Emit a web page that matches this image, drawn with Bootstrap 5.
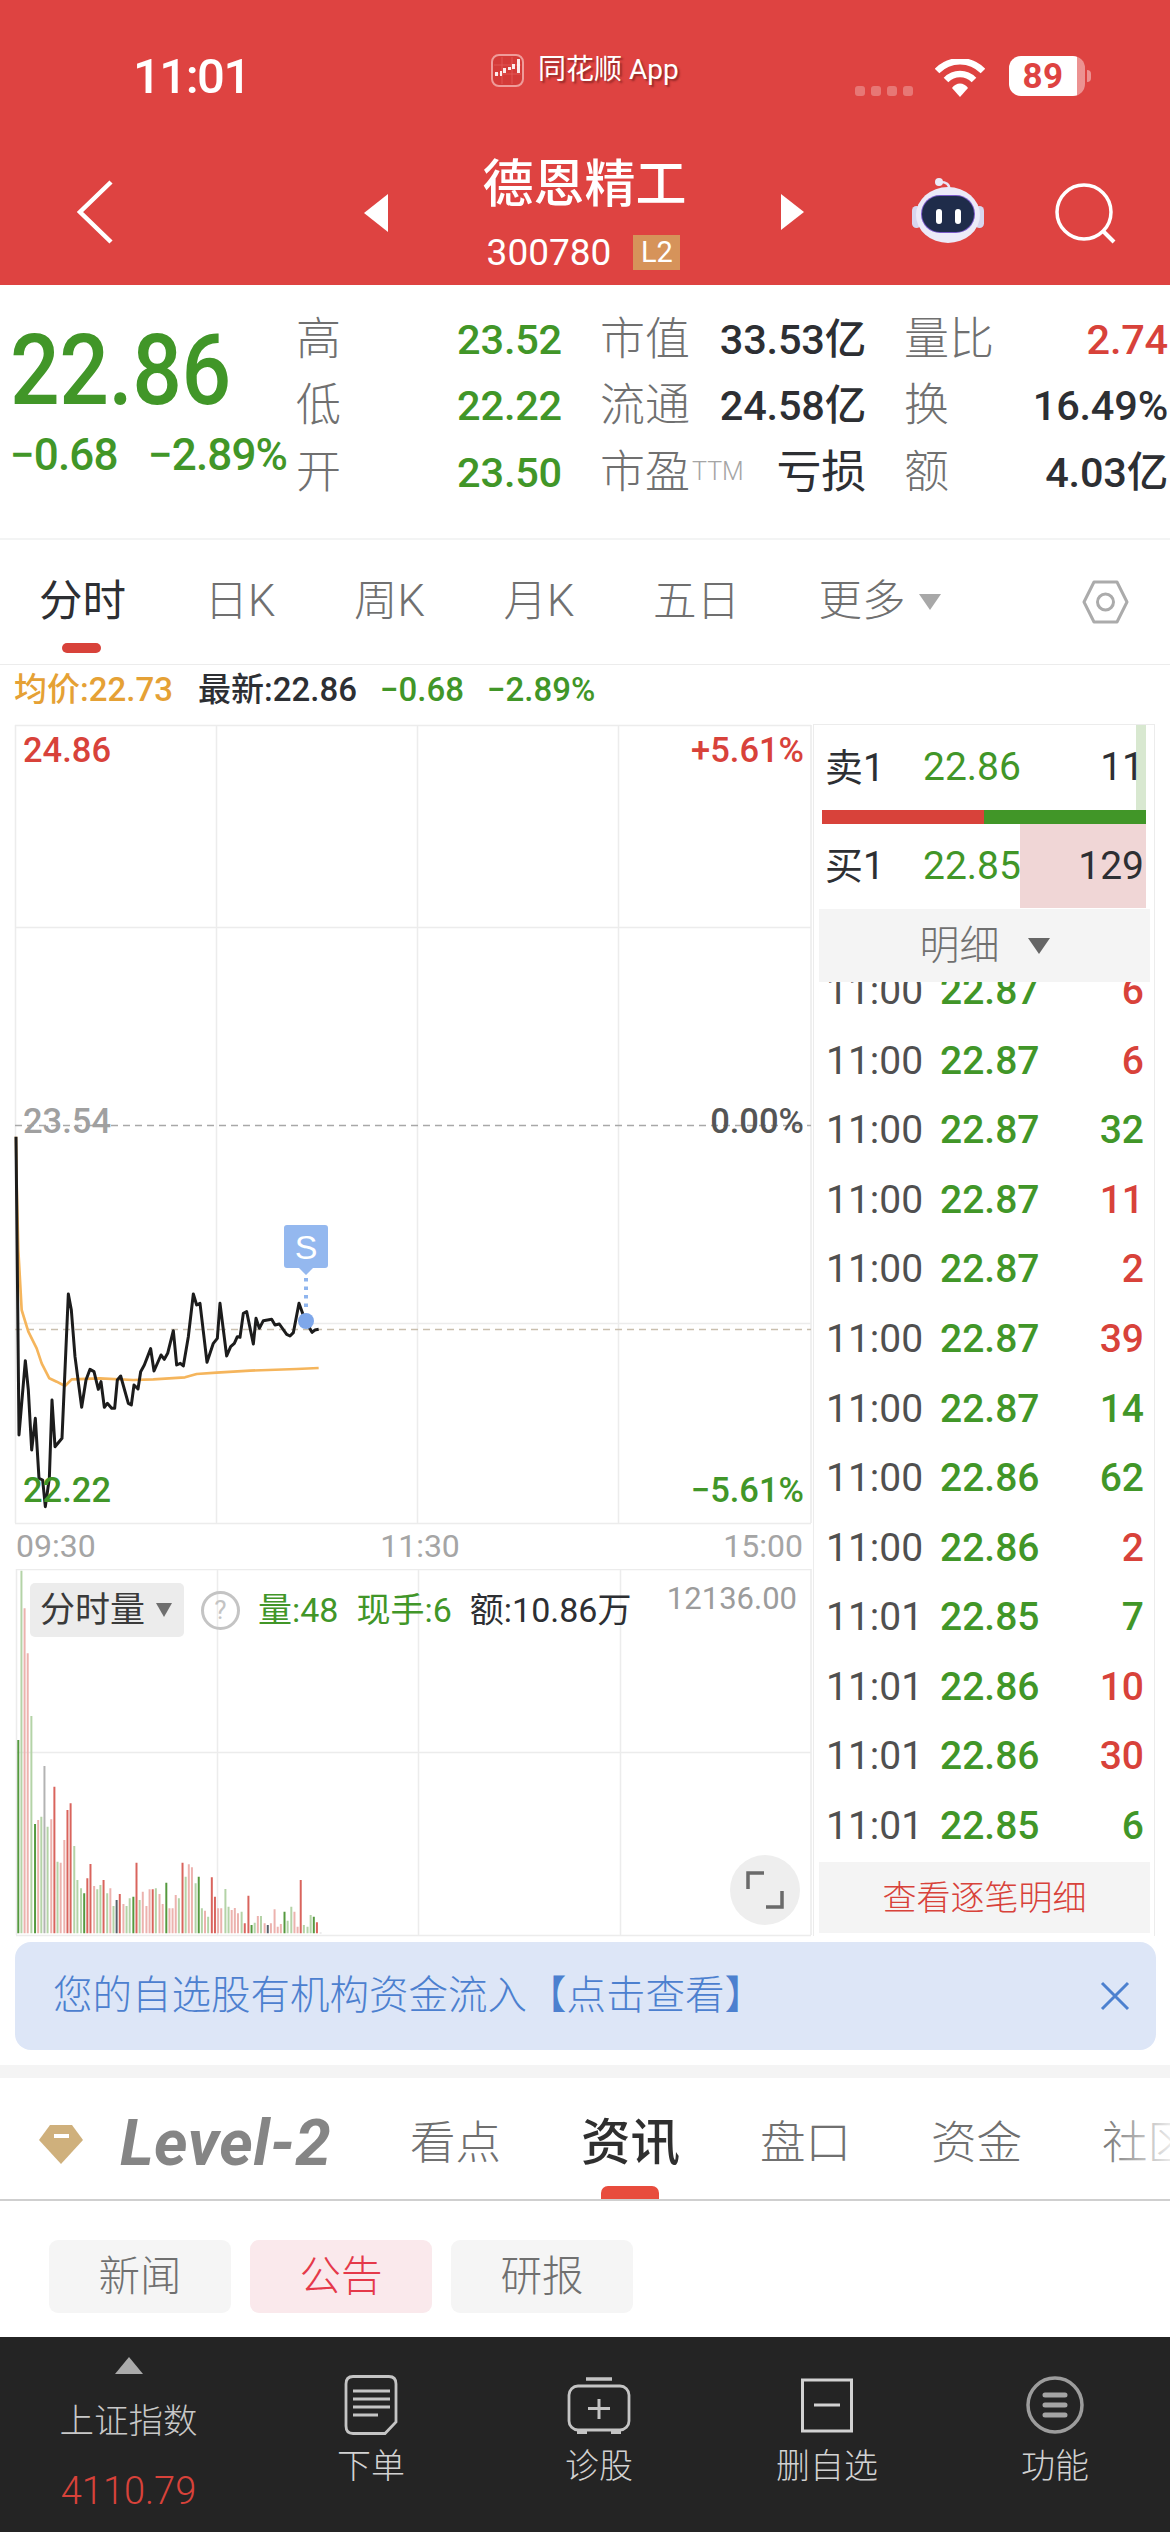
<!doctype html>
<html lang="zh-CN">
<head>
<meta charset="utf-8">
<title>德恩精工 300780</title>
<link href="https://cdn.jsdelivr.net/npm/bootstrap@5.3.0/dist/css/bootstrap.min.css" rel="stylesheet">
<style>
:root{--up:#d8423a;--down:#419628;--ink:#2d2f33;--mute:#707070;--line:#ececec;}
html,body{margin:0;background:#fff;}
body{width:1170px;height:2532px;overflow:hidden;font-family:Roboto,"Noto Sans CJK SC",sans-serif;color:var(--ink);line-height:1;}
.c-up{color:var(--up);}.c-down{color:var(--down);}.c-mute{color:var(--mute);}
/* header */
.app-head{background:#de4341;height:285px;color:#fff;}
.status-row{height:150px;padding:50px 0 0 133px;}
.st-time{width:358px;font-size:49px;font-weight:500;letter-spacing:-1.5px;margin-top:2px;}
.st-mid{width:364px;height:50px;margin-top:-5px;font-size:28px;gap:14px;text-shadow:2px 2px 2px rgba(90,20,20,.55);}
.st-right{gap:22px;margin-top:6px;}
.st-dots{gap:6px;margin-top:30px;}
.st-wifi{margin-top:3px;}
.st-dots i{display:block;width:10px;height:10px;border-radius:3px;background:rgba(255,255,255,.28);}
.st-batt{width:76px;height:40px;border-radius:12px;background:linear-gradient(90deg,#fff 89%,rgba(255,255,255,.42) 89%);color:#de4341;font-size:35px;font-weight:700;padding-right:8px;letter-spacing:.5px;position:relative;margin-left:2px;}
.st-batt::after{content:"";position:absolute;right:-6px;top:14px;width:4px;height:12px;background:rgba(255,255,255,.42);border-radius:0 4px 4px 0;}
.nav-row{height:135px;}
.nav-back{width:364px;padding:30px 0 0 76px;}
.nav-tri{margin-top:44px;}
.nav-title{width:393px;text-align:center;}
.nav-name{height:70px;font-size:51px;font-weight:500;line-height:70px;}
.nav-code{height:65px;font-size:37px;gap:22px;margin-left:-2px;}
.lv-tag{width:47px;height:35px;background:#d6935a;font-size:29px;color:#fff;}
.nav-bot{margin:28px 0 0 108px;}
.nav-find{margin:33px 0 0 71px;}
/* quote */
.quote-box{height:255px;border-bottom:2px solid #f3f4f4;padding:21px 2px 0 13px;}
.quote-main{width:283px;margin-left:-3px;margin-right:3px;}
.price-big{font-size:87.5px;font-weight:500;color:var(--down);margin-top:22px;height:84px;line-height:84px;transform:scaleY(1.13);letter-spacing:-.5px;transform-origin:left center;}
.price-sub{font-size:44px;font-weight:500;color:var(--down);margin-top:21px;letter-spacing:-.9px;justify-content:space-between;width:277px;white-space:nowrap;}
.quote-grid{display:grid;grid-template-columns:266px 266px 264px;column-gap:38px;grid-auto-rows:66.5px;}
.q-cell{font-size:41.5px;white-space:nowrap;}
.q-val{font-weight:500;letter-spacing:-.2px;}
.q-val.plain{font-weight:400;font-size:45px;}
.q-lab{font-size:45px;color:var(--mute);font-weight:300;}
.q-sup{font-size:25px;color:#a5a5a5;font-weight:300;vertical-align:8px;margin-left:2px;}
/* period tabs */
.period-bar{height:125px;border-bottom:1px solid var(--line);padding:0 41px 0 39px;gap:78.5px;}
.period-item{position:relative;font-size:43.5px;color:var(--mute);font-weight:300;}
.period-item.on{color:var(--ink);font-weight:400;}
.period-item.on::after{content:"";position:absolute;left:23px;top:63px;width:39px;height:10px;border-radius:5px;background:#d8423a;}
.tri-down{display:inline-block;width:0;height:0;border-style:solid;border-width:16px 11px 0 11px;border-color:#a8a8a8 transparent transparent;}
.period-more{gap:14px;}
.period-gear{margin-left:auto;}
.quote-line{height:59px;padding:0 0 10px 14px;font-size:33px;font-weight:500;}
/* chart */
.chart-wrap{height:1218px;}
.chart-left{width:813px;flex:none;}
.chart-left svg{display:block;}
.chart-txt{font-size:34.5px;font-weight:500;font-family:Roboto,"Noto Sans CJK SC",sans-serif;}
.vol-pane{position:relative;height:373px;}
.vol-read{position:absolute;left:30px;top:14px;font-size:34px;align-items:center;}
.vol-pill{width:154px;height:54px;background:#ececec;border-radius:5px;padding-left:10px;font-size:35px;gap:11px;color:#3a3a3a;}
.vol-tip{width:39px;height:39px;border:3px solid #c4c4c4;border-radius:50%;color:#c4c4c4;font-size:26px;margin:0 18px 0 17px;}
.vol-read .sp{margin-right:18px;}
.vol-max{position:absolute;right:16px;top:14px;font-size:31px;color:#9c9c9c;}
.vol-exp{position:absolute;left:730px;top:286px;width:70px;height:70px;border-radius:50%;background:#eeeeee;}
/* right panel */
.deal-panel{width:342px;border:1px solid var(--line);border-bottom:0;height:1212px;}
.ob-row{margin:0 8px 0 8px;padding:0 2px 0 3px;font-size:39px;position:relative;}
.ob-row .lab{width:98px;font-size:38px;}
.ob-sell{height:85px;}
.ob-buy{height:84px;}
.ob-depth{position:absolute;top:0;bottom:0;right:0;}
.ob-vol{margin-left:auto;position:relative;}
.ob-bar{margin:0 8px;height:14px;background:var(--down);}
.ob-bar div{height:14px;background:var(--up);}
.deal-head{margin:1px 4px 0 5px;height:73px;background:#f4f4f4;font-size:40px;color:var(--mute);gap:28px;position:relative;z-index:1;font-weight:300;}
.deal-head .tri-down{border-color:#666 transparent transparent;}
.deal-list{height:878px;overflow:hidden;}
.deal-inner{margin-top:-25px;}
.deal-row{height:69.55px;padding:0 10px 0 12px;font-size:39px;font-weight:500;}
.deal-row .t{width:114px;color:#505050;font-weight:400;}
.deal-row .v{margin-left:auto;}
.deal-more{margin:2px 4px 0 5px;height:71px;background:#f4f4f4;font-size:34px;color:var(--up);font-weight:300;}
/* notice */
.notice-bar{margin:0 14px 0 15px;height:108px;border-radius:16px;background:#dde6f7;padding:0 26px 0 38px;color:#4c80cf;font-size:39.5px;font-weight:300;}
.band{height:13px;background:#f4f4f4;margin-top:15px;}
/* bottom tabs */
.sec-tabs{height:123px;border-bottom:2px solid #cfcfcf;overflow:hidden;position:relative;padding-top:11px;}
.sec-logo{width:410px;flex:none;padding-left:39px;gap:37px;}
.lv-word{font-size:64px;font-style:italic;font-weight:700;color:#858585;letter-spacing:.5px;}
.sec-list{gap:80px;font-size:45.5px;color:var(--mute);font-weight:300;white-space:nowrap;}
.sec-item{position:relative;}
.sec-item.on{color:#2f2f2f;font-size:49.5px;font-weight:500;}
.sec-item.on::after{content:"";position:absolute;left:20px;top:67px;width:58px;height:13px;border-radius:7px 7px 0 0;background:#e84c3d;}
.sec-fade{position:absolute;right:0;top:0;bottom:0;width:70px;background:linear-gradient(90deg,rgba(255,255,255,0),rgba(255,255,255,.85));}
.sub-tabs{height:136px;padding:39px 0 0 49px;gap:19px;}
.sub-pill{width:182px;height:73px;background:#f5f5f5;border-radius:9px;font-size:41.5px;color:var(--mute);font-weight:300;}
.sub-pill.on{background:#fae9ec;color:#e5394a;}
/* dock */
.dock{height:195px;background:#242424;}
.dock-index{width:257px;flex:none;padding-top:20px;color:#c8c8c8;}
.dock-tri{width:0;height:0;border-style:solid;border-width:0 14px 17px;border-color:transparent transparent #aaa;margin-bottom:28px;}
.dock-name{font-size:34.5px;font-weight:300;height:38px;line-height:38px;}
.dock-num{font-size:38px;font-weight:300;color:#d8423a;margin-top:32px;}
.dock-item{width:228px;flex:none;padding-top:38px;color:#d2d2d2;}
.dock-ico{height:60px;}
.dock-lab{font-size:34px;font-weight:300;height:42px;line-height:42px;margin-top:10px;}
</style>
</head>
<body>

<header class="app-head">
  <div class="status-row d-flex">
    <div class="st-time">11:01</div>
    <div class="st-mid d-flex align-items-center">
      <svg width="33" height="33" viewBox="0 0 33 33"><rect x="1" y="1" width="31" height="31" rx="7" fill="#d43b39" stroke="#ef9c9a" stroke-width="2"/><path d="M3 11H30M3 20H30M11 3V30M21 3V30" stroke="#e5615f" stroke-width=".7"/><path d="M4 18h3v4H4zM9 17h2v5H9zM12 14h3v5h-3zM17 13h3v3h-3zM21 10h3v5h-3zM26 5h3v14h-3z" fill="#fff" opacity=".9"/></svg>
      <span>同花顺 App</span>
    </div>
    <div class="st-right d-flex align-items-start">
      <div class="st-dots d-flex"><i></i><i></i><i></i><i></i></div>
      <svg class="st-wifi" width="50" height="38" viewBox="0 0 50 38"><path d="M2 12C15-1 35-1 48 12" fill="none" stroke="#fff" stroke-width="6.5"/><path d="M11 21C19 13 31 13 39 21" fill="none" stroke="#fff" stroke-width="6.5"/><path d="M17 29C21 23 29 23 33 29L25 38Z" fill="#fff"/></svg>
      <div class="st-batt d-flex align-items-center justify-content-center">89</div>
    </div>
  </div>
  <div class="nav-row d-flex align-items-start">
    <div class="nav-back"><svg width="38" height="64" viewBox="0 0 38 64"><path d="M35 2 4 32 35 62" fill="none" stroke="#fff" stroke-width="4.5"/></svg></div>
    <svg class="nav-tri" width="24" height="38" viewBox="0 0 24 38"><path d="M24 0V38L0 19Z" fill="#fff"/></svg>
    <div class="nav-title">
      <div class="nav-name">德恩精工</div>
      <div class="nav-code d-flex align-items-center justify-content-center"><span>300780</span><span class="lv-tag d-flex align-items-center justify-content-center">L2</span></div>
    </div>
    <svg class="nav-tri" width="23" height="36" viewBox="0 0 23 36"><path d="M0 0V36L23 18Z" fill="#fff"/></svg>
    <svg class="nav-bot" width="72" height="66" viewBox="0 0 72 66"><path d="M37 12C38 6 34 4 28 4" fill="none" stroke="#e9e6f6" stroke-width="2.5"/><circle cx="27" cy="4" r="4" fill="#eceaf7"/><rect x="0" y="28" width="9" height="22" rx="4.5" fill="#d8d6ee"/><rect x="63" y="28" width="9" height="22" rx="4.5" fill="#d8d6ee"/><ellipse cx="36" cy="37" rx="32" ry="28" fill="#eceaf8"/><rect x="9" y="17" width="54" height="38" rx="19" fill="#7a5ac8"/><rect x="10" y="18" width="52" height="36" rx="18" fill="#1f2c4a"/><rect x="24" y="31" width="6" height="15" rx="3" fill="#fff"/><rect x="43" y="31" width="6" height="15" rx="3" fill="#fff"/></svg>
    <svg class="nav-find" width="62" height="62" viewBox="0 0 62 62"><circle cx="29" cy="29" r="27" fill="none" stroke="#fff" stroke-width="3.5"/><path d="M48 48 59 59" stroke="#fff" stroke-width="4"/></svg>
  </div>
</header>

<section class="quote-box d-flex">
  <div class="quote-main">
    <div class="price-big">22.86</div>
    <div class="price-sub d-flex"><span>−0.68</span><span>−2.89%</span></div>
  </div>
  <div class="quote-grid">
    <div class="q-cell d-flex justify-content-between align-items-center"><span class="q-lab">高</span><span class="q-val c-down">23.52</span></div>
    <div class="q-cell d-flex justify-content-between align-items-center"><span class="q-lab">市值</span><span class="q-val">33.53亿</span></div>
    <div class="q-cell d-flex justify-content-between align-items-center"><span class="q-lab">量比</span><span class="q-val c-up">2.74</span></div>
    <div class="q-cell d-flex justify-content-between align-items-center"><span class="q-lab">低</span><span class="q-val c-down">22.22</span></div>
    <div class="q-cell d-flex justify-content-between align-items-center"><span class="q-lab">流通</span><span class="q-val">24.58亿</span></div>
    <div class="q-cell d-flex justify-content-between align-items-center"><span class="q-lab">换</span><span class="q-val">16.49%</span></div>
    <div class="q-cell d-flex justify-content-between align-items-center"><span class="q-lab">开</span><span class="q-val c-down">23.50</span></div>
    <div class="q-cell d-flex justify-content-between align-items-center"><span class="q-lab">市盈<span class="q-sup">TTM</span></span><span class="q-val plain">亏损</span></div>
    <div class="q-cell d-flex justify-content-between align-items-center"><span class="q-lab">额</span><span class="q-val">4.03亿</span></div>
  </div>
</section>

<nav class="period-bar d-flex align-items-center">
  <span class="period-item on">分时</span>
  <span class="period-item">日K</span>
  <span class="period-item">周K</span>
  <span class="period-item">月K</span>
  <span class="period-item">五日</span>
  <span class="period-item period-more d-flex align-items-center">更多<i class="tri-down"></i></span>
  <svg class="period-gear" width="47" height="44" viewBox="0 0 47 44"><path d="M12 2H35L45 22 35 42H12L2 22Z" fill="none" stroke="#ababab" stroke-width="3" stroke-linejoin="round"/><circle cx="23.500" cy="22" r="8" fill="none" stroke="#ababab" stroke-width="3"/></svg>
</nav>

<div class="quote-line d-flex align-items-center">
  <span style="color:#e5a135;width:184px">均价:22.73</span>
  <span style="width:182px">最新:22.86</span>
  <span class="c-down" style="width:107px">−0.68</span>
  <span class="c-down">−2.89%</span>
</div>

<div class="chart-wrap d-flex">
  <div class="chart-left">
    <svg width="813" height="845" viewBox="0 724 813 845" class="chart-txt">
      <path d="M15.500 725V1523M216.500 725V1523M417.500 725V1523M618.500 725V1523M811 725V1523M15 725.500H811M15 927.500H811M15 1323.500H811M15 1523.500H811" stroke="#ececec" stroke-width="1.5" fill="none"/>
      <path d="M15 1125.500H811" stroke="#a8a8a8" stroke-width="1.5" stroke-dasharray="7 5"/>
      <path d="M15 1329.500H811" stroke="#c9bfae" stroke-width="1.5" stroke-dasharray="7 5"/>
      <g transform="translate(0 1150) scale(.33333)" fill="none" stroke-linejoin="round">
        <path d="M48-40 50 100 55 300 65 480 85 545 110 595 125 640 148 685 170 695 195 708 215 688 300 685 400 690 460 688 555 682 590 672 650 668 750 662 890 657 956 654" stroke="#f5b55c" stroke-width="8"/>
        <path d="M48-40 57 855 76 632 85 720 95 900 106 805 117 985 128 990 136 1070 148 985 156 750 165 890 186 865 205 432 214 480 225 620 245 772 258 690 270 658 282 665 295 718 303 695 313 772 322 760 335 775 344 775 352 690 362 678 385 760 394 765 402 705 414 717 422 665 433 645 452 596 462 663 483 615 493 628 503 610 520 542 530 645 541 640 550 648 565 560 580 432 590 465 600 460 621 637 640 580 652 565 660 460 680 618 692 590 703 580 712 560 720 562 730 490 740 485 760 582 768 505 778 535 790 512 815 508 825 525 838 522 860 553 870 558 880 548 897 460 915 510 936 547 945 540 956 538" stroke="#1c1c1c" stroke-width="9"/>
      </g>
      <path d="M306 1278V1312" stroke="#8fb5ee" stroke-width="4" stroke-dasharray="3.500 5"/>
      <circle cx="306" cy="1321" r="8" fill="#7ea7ea"/>
      <path d="M287 1225H325Q328 1225 328 1228V1265Q328 1268 325 1268H313L306 1275 299 1268H287Q284 1268 284 1265V1228Q284 1225 287 1225Z" fill="#94b8ef"/>
      <text x="306" y="1259" text-anchor="middle" font-size="34" font-weight="400" fill="#fff" font-family="Liberation Sans">S</text>
      <text x="23" y="762" fill="#d8423a">24.86</text>
      <text x="804" y="762" text-anchor="end" fill="#d8423a">+5.61%</text>
      <text x="23" y="1133" fill="#a0a0a0">23.54</text>
      <text x="804" y="1133" text-anchor="end" fill="#555">0.00%</text>
      <text x="23" y="1502" fill="#419628">22.22</text>
      <text x="804" y="1502" text-anchor="end" fill="#419628">−5.61%</text>
      <text x="16" y="1557" fill="#a5a5a5" font-size="32" font-weight="400">09:30</text>
      <text x="420" y="1557" fill="#a5a5a5" font-size="32" font-weight="400" text-anchor="middle">11:30</text>
      <text x="803" y="1557" fill="#a5a5a5" font-size="32" font-weight="400" text-anchor="end">15:00</text>
    </svg>
    <div class="vol-pane">
      <svg width="813" height="373" viewBox="0 1569 813 373">
        <path d="M16 1569.500H811M16 1752.500H811M16 1935.500H811M16.500 1569V1935M217.500 1569V1935M418.500 1569V1935M620.500 1569V1935M811 1569V1935" stroke="#ececec" stroke-width="1.5" fill="none"/>
        <g transform="translate(0 1540) scale(.523 .33333)" fill="none" stroke-width="3.800">
          <path stroke="#ecb2ae" d="M47 1180V205M53 1180V340M73 1180V840M98 1180V838M116 1180V968M123 1180V900M180 1180V1038M211 1180V1045M236 1180V1092M273 1180V1055M280 1180V1098M286 1180V1048M305 1180V1062M311 1180V1092M324 1180V1105M330 1180V1105M336 1180V1065M361 1180V973M367 1180V982M392 1180V1112M417 1180V1105M423 1180V1105M443 1180V1110M449 1180V1104M455 1180V1120M493 1180V1128M506 1180V1150M518 1180V1150M525 1180V1108M531 1180V1160M537 1180V1152M563 1180V1115M569 1180V1160"/>
          <path stroke="#d9645d" d="M104 1180V740M129 1180V810M135 1180V790M167 1180V1015M173 1180V972M198 1180V1020M229 1180V1062M261 1180V968M292 1180V1048M349 1180V968M405 1180V1012M411 1180V1070M468 1180V1150M475 1180V1067M575 1180V1020M606 1180V1147"/>
          <path stroke="#b4d3a7" d="M41 1180V92M60 1180V528M79 1180V830M91 1180V860M110 1180V965M142 1180V918M148 1180V1020M155 1180V1045M186 1180V1048M192 1180V1035M205 1180V1060M217 1180V1098M242 1180V1098M248 1180V1075M267 1180V1080M298 1180V1045M342 1180V1075M355 1180V1010M374 1180V1030M386 1180V1105M398 1180V1130M431 1180V1047M437 1180V1100M462 1180V1115M487 1180V1148M499 1180V1128M550 1180V1142M557 1180V1100M581 1180V1155M588 1180V1160M594 1180V1125"/>
          <path stroke="#55993f" d="M35 1180V600M67 1180V852M161 1180V1060M255 1180V1070M318 1180V1028M380 1180V1010M481 1180V1155M544 1180V1115M600 1180V1130"/>
          <path stroke="#b3b3b3" d="M85 1180V678M613 1180V1178"/>
          <path stroke="#56606a" d="M223 1180V1080M512 1180V1155"/>
        </g>
      </svg>
      <div class="vol-read d-flex">
        <div class="vol-pill d-flex align-items-center">分时量<i class="tri-down" style="border-width:14px 8px 0;border-color:#6f6f6f transparent transparent"></i></div>
        <div class="vol-tip d-flex align-items-center justify-content-center">?</div>
        <span class="c-down sp">量:48</span>
        <span class="c-down sp">现手:6</span>
        <span>额:10.86万</span>
      </div>
      <div class="vol-max">12136.00</div>
      <div class="vol-exp d-flex align-items-center justify-content-center">
        <svg width="38" height="38" viewBox="0 0 38 38"><path d="M2 18V2H18M36 20V36H20" fill="none" stroke="#6a6a6a" stroke-width="3.500"/></svg>
      </div>
    </div>
  </div>
  <aside class="deal-panel">
    <div class="ob-row ob-sell d-flex align-items-center">
      <div class="ob-depth" style="width:10px;background:#d8e8d0"></div>
      <span class="lab">卖1</span><span class="c-down">22.86</span><span class="ob-vol">11</span>
    </div>
    <div class="ob-bar"><div style="width:50%"></div></div>
    <div class="ob-row ob-buy d-flex align-items-center">
      <div class="ob-depth" style="width:126px;background:#f0d6d6"></div>
      <span class="lab">买1</span><span class="c-down">22.85</span><span class="ob-vol">129</span>
    </div>
    <div class="deal-head d-flex align-items-center justify-content-center"><span>明细</span><i class="tri-down"></i></div>
    <div class="deal-list"><div class="deal-inner">
      <div class="deal-row d-flex align-items-center"><span class="t">11:00</span><span class="c-down">22.87</span><span class="v c-up">6</span></div>
      <div class="deal-row d-flex align-items-center"><span class="t">11:00</span><span class="c-down">22.87</span><span class="v c-up">6</span></div>
      <div class="deal-row d-flex align-items-center"><span class="t">11:00</span><span class="c-down">22.87</span><span class="v c-down">32</span></div>
      <div class="deal-row d-flex align-items-center"><span class="t">11:00</span><span class="c-down">22.87</span><span class="v c-up">11</span></div>
      <div class="deal-row d-flex align-items-center"><span class="t">11:00</span><span class="c-down">22.87</span><span class="v c-up">2</span></div>
      <div class="deal-row d-flex align-items-center"><span class="t">11:00</span><span class="c-down">22.87</span><span class="v c-up">39</span></div>
      <div class="deal-row d-flex align-items-center"><span class="t">11:00</span><span class="c-down">22.87</span><span class="v c-down">14</span></div>
      <div class="deal-row d-flex align-items-center"><span class="t">11:00</span><span class="c-down">22.86</span><span class="v c-down">62</span></div>
      <div class="deal-row d-flex align-items-center"><span class="t">11:00</span><span class="c-down">22.86</span><span class="v c-up">2</span></div>
      <div class="deal-row d-flex align-items-center"><span class="t">11:01</span><span class="c-down">22.85</span><span class="v c-down">7</span></div>
      <div class="deal-row d-flex align-items-center"><span class="t">11:01</span><span class="c-down">22.86</span><span class="v c-up">10</span></div>
      <div class="deal-row d-flex align-items-center"><span class="t">11:01</span><span class="c-down">22.86</span><span class="v c-up">30</span></div>
      <div class="deal-row d-flex align-items-center"><span class="t">11:01</span><span class="c-down">22.85</span><span class="v c-down">6</span></div>
    </div></div>
    <div class="deal-more d-flex align-items-center justify-content-center">查看逐笔明细</div>
  </aside>
</div>

<div class="notice-bar d-flex align-items-center justify-content-between">
  <span>您的自选股有机构资金流入【点击查看】</span>
  <svg width="30" height="30" viewBox="0 0 30 30"><path d="M2 2 28 28M28 2 2 28" stroke="#4c80cf" stroke-width="3"/></svg>
</div>
<div class="band"></div>

<div class="sec-tabs d-flex align-items-center">
  <div class="sec-logo d-flex align-items-center">
    <svg width="44" height="39" viewBox="0 0 44 39"><path d="M11 0H33L44 15 22 39 0 15Z" fill="#cfb07c"/><rect x="15" y="9" width="15" height="4" fill="#fff"/></svg>
    <span class="lv-word">Level-2</span>
  </div>
  <div class="sec-list d-flex align-items-center">
    <span class="sec-item">看点</span>
    <span class="sec-item on">资讯</span>
    <span class="sec-item">盘口</span>
    <span class="sec-item">资金</span>
    <span class="sec-item">社区</span>
  </div>
  <div class="sec-fade"></div>
</div>

<div class="sub-tabs d-flex">
  <div class="sub-pill d-flex align-items-center justify-content-center">新闻</div>
  <div class="sub-pill on d-flex align-items-center justify-content-center">公告</div>
  <div class="sub-pill d-flex align-items-center justify-content-center">研报</div>
</div>

<footer class="dock d-flex">
  <div class="dock-index d-flex flex-column align-items-center">
    <div class="dock-tri"></div>
    <div class="dock-name">上证指数</div>
    <div class="dock-num">4110.79</div>
  </div>
  <div class="dock-item d-flex flex-column align-items-center">
    <svg class="dock-ico" width="54" height="60" viewBox="0 0 54 60"><path d="M9 1.500H45Q52 1.500 52 9V47L41 58.500H9Q2 58.500 2 51V9Q2 1.500 9 1.500Z" fill="none" stroke="#c4c4c4" stroke-width="2.800"/><path d="M9 16H46M9 24H46M9 32H46M9 40H34" stroke="#c4c4c4" stroke-width="3"/></svg>
    <div class="dock-lab">下单</div>
  </div>
  <div class="dock-item d-flex flex-column align-items-center">
    <svg class="dock-ico" width="64" height="60" viewBox="0 0 64 60"><path d="M19 4H45" stroke="#c4c4c4" stroke-width="3.500"/><rect x="2" y="11" width="60" height="44" rx="9" fill="none" stroke="#c4c4c4" stroke-width="2.800"/><path d="M10 55h10v4H10zM44 55h10v4H44z" fill="#c4c4c4"/><path d="M32 24V44M21 33.500H43" stroke="#c4c4c4" stroke-width="3"/></svg>
    <div class="dock-lab">诊股</div>
  </div>
  <div class="dock-item d-flex flex-column align-items-center">
    <svg class="dock-ico" width="52" height="60" viewBox="0 0 52 60"><rect x="1.500" y="5" width="49" height="51" fill="none" stroke="#d2d2d2" stroke-width="3"/><path d="M13 30H39" stroke="#d2d2d2" stroke-width="3"/></svg>
    <div class="dock-lab">删自选</div>
  </div>
  <div class="dock-item d-flex flex-column align-items-center">
    <svg class="dock-ico" width="60" height="60" viewBox="0 0 60 60"><circle cx="30" cy="30" r="27" fill="none" stroke="#9c9c9c" stroke-width="3.500"/><path d="M20 20H40M20 30H40M20 40H40" stroke="#a4a4a4" stroke-width="5" stroke-linecap="round"/></svg>
    <div class="dock-lab">功能</div>
  </div>
</footer>
</body>
</html>
